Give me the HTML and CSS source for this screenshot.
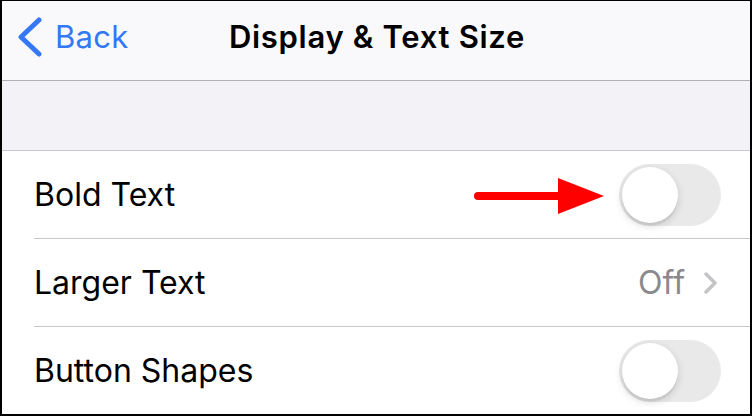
FILE: index.html
```html
<!DOCTYPE html>
<html>
<head>
<meta charset="utf-8">
<link rel="stylesheet" href="styles.css">
</head>
<body>
<div class="screen">
  <header class="nav">
    <div class="back">
      <svg class="back-chev" width="26" height="40" viewBox="0 0 26 40"><path d="M22 3 L4 20 L22 37" fill="none" stroke="#3478f6" stroke-width="5" stroke-linecap="round" stroke-linejoin="round"/></svg>
      <span class="back-text">Back</span>
    </div>
    <div class="title">Display &amp; Text Size</div>
  </header>
  <div class="gap"></div>
  <div class="list">
    <div class="row">
      <span class="label">Bold Text</span>
      <div class="accessory">
        <svg class="arrow" width="132" height="40" viewBox="0 0 132 40"><line x1="4" y1="20" x2="90" y2="20" stroke="#ff0000" stroke-width="8" stroke-linecap="round"/><polygon points="84,2 130,20 84,38" fill="#ff0000"/></svg>
        <div class="toggle"><div class="knob"></div></div>
      </div>
    </div>
    <div class="row">
      <span class="label">Larger Text</span>
      <div class="accessory">
        <span class="value">Off</span>
        <svg class="disc" width="16" height="22" viewBox="0 0 16 22"><path d="M3 2 L12 11 L3 20" fill="none" stroke="#c4c4c7" stroke-width="3.5" stroke-linecap="round" stroke-linejoin="round"/></svg>
      </div>
    </div>
    <div class="row">
      <span class="label">Button Shapes</span>
      <div class="accessory">
        <div class="toggle"><div class="knob"></div></div>
      </div>
    </div>
  </div>
</div>
</body>
</html>
```
FILE: styles.css
```css
html, body {
  margin: 0;
  padding: 0;
  background: #000;
}
.screen {
  width: 748px;
  height: 413px;
  margin: 1px 2px 2px 2px;
  background: #fff;
  overflow: hidden;
  font-family: Inter, "Noto Sans", sans-serif;
}
.nav {
  height: 71px;
  padding-bottom: 8px;
  background: #f9f9fb;
  border-bottom: 1px solid #b1b1b4;
  display: flex;
  align-items: center;
  position: relative;
}
.back {
  display: flex;
  align-items: center;
  padding-left: 15px;
  gap: 12px;
  color: #3478f6;
}
.back-chev { display: block; margin-top: 0; }
.back-text {
  font-size: 31px;
  letter-spacing: 0.3px;
}
.title {
  position: absolute;
  left: 0;
  right: 0;
  text-align: center;
  font-size: 31px;
  font-weight: 600;
  letter-spacing: 0.7px;
  color: #000;
  pointer-events: none;
  padding-left: 2px;
}
.gap {
  height: 69px;
  background: #f2f2f7;
  border-bottom: 1px solid #c8c7cc;
}
.list {
  padding-left: 32px;
}
.row {
  height: 87px;
  border-bottom: 1px solid #c8c7cc;
  display: flex;
  align-items: center;
  justify-content: space-between;
  padding-right: 29px;
}
.label {
  font-size: 32px;
  color: #000;
}
.accessory {
  display: flex;
  align-items: center;
}
.arrow { display: block; margin-right: 13px; margin-top: 3px; }
.toggle {
  width: 102px;
  height: 62px;
  border-radius: 31px;
  background: #e9e9ea;
  position: relative;
}
.knob {
  position: absolute;
  left: 3px;
  top: 3px;
  width: 56px;
  height: 56px;
  border-radius: 50%;
  background: #fff;
  box-shadow: 0 3px 8px rgba(0,0,0,0.15), 0 3px 1px rgba(0,0,0,0.06);
}
.value {
  font-size: 32px;
  color: #8a8a8e;
  margin-right: 18px;
}
.disc { display: block; margin-right: 2px; }
```
